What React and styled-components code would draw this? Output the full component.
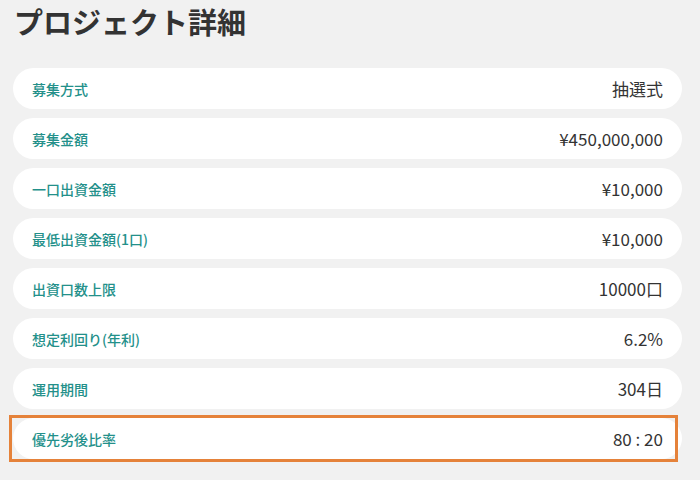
import React from "react";
import styled, { createGlobalStyle } from "styled-components";

const GlobalStyle = createGlobalStyle`
  html, body {
    margin: 0;
    padding: 0;
    background: #f1f1f1;
    font-family: "Noto Sans CJK JP", "Noto Sans", sans-serif;
  }
`;

const Page = styled.div`
  width: 700px;
  height: 480px;
  box-sizing: border-box;
  padding: 0 18px 0 13px;
  overflow: hidden;
`;

const Title = styled.h2`
  margin: 0;
  padding: 1px 0 0 1px;
  font-size: 29px;
  line-height: 40px;
  font-weight: 700;
  color: #333;
`;

const List = styled.div`
  display: flex;
  flex-direction: column;
  gap: 9px;
  margin-top: 27px;
`;

const Row = styled.div`
  position: relative;
  display: flex;
  align-items: center;
  justify-content: space-between;
  height: 41px;
  padding: 0 19px;
  background: #fff;
  border-radius: 21px;
`;

const Label = styled.span`
  font-size: 14px;
  font-weight: 500;
  color: #23908a;
`;

const Value = styled.span`
  font-size: 17px;
  color: #333;
`;

const Highlight = styled.div`
  position: absolute;
  left: -4px;
  right: 4px;
  top: -3px;
  bottom: -3px;
  border: 3px solid #e5823a;
  pointer-events: none;
`;

const rows = [
  ["募集方式", "抽選式"],
  ["募集金額", "¥450,000,000"],
  ["一口出資金額", "¥10,000"],
  ["最低出資金額(1口)", "¥10,000"],
  ["出資口数上限", "10000口"],
  ["想定利回り(年利)", "6.2%"],
  ["運用期間", "304日"],
  ["優先劣後比率", "80 : 20", true],
];

export default function App() {
  return (
    <Page>
      <GlobalStyle />
      <Title>プロジェクト詳細</Title>
      <List>
        {rows.map(([label, value, marked]) => (
          <Row key={label}>
            <Label>{label}</Label>
            <Value>{value}</Value>
            {marked && <Highlight />}
          </Row>
        ))}
      </List>
    </Page>
  );
}
